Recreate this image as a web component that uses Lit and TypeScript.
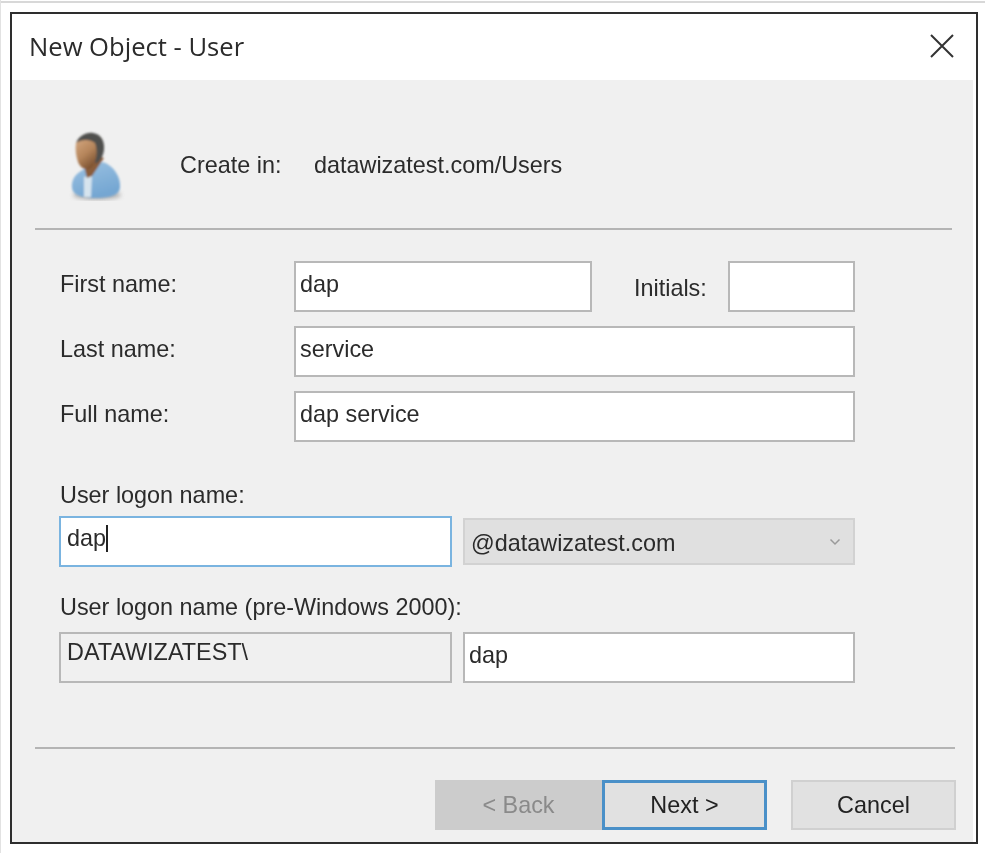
import { LitElement, html, css } from 'lit';
import { customElement } from 'lit/decorators.js';

@customElement('app-root')
export class AppRoot extends LitElement {
  static styles = css`
    :host {
      display: block;
      width: 985px;
      height: 853px;
      box-sizing: border-box;
      background: #fff;
      border-left: 1px solid #e2e2e2;
      padding: 0 0 0 9px;
      font-family: 'Liberation Sans', Arial, sans-serif;
      font-size: 23.4px;
      color: #2b2b2b;
      overflow: hidden;
    }
    .topline {
      height: 2px;
      margin: 1px 0 9px -9px;
      background: #d8d8d8;
    }
    .dialog {
      width: 968px;
      height: 832px;
      box-sizing: border-box;
      border: 2px solid #2e2e2e;
      background: #fff;
      padding-right: 3px;
      display: flex;
      flex-direction: column;
      filter: blur(0.5px);
    }
    .titlebar {
      height: 66px;
      flex: none;
      background: #fff;
      display: flex;
      align-items: center;
      justify-content: space-between;
      padding: 0 19px 0 17px;
      font-family: 'Open Sans', sans-serif;
      font-size: 25.6px;
    }
    .titlebar span {
      padding-bottom: 2px;
    }
    .close {
      display: block;
      margin-bottom: 2px;
    }
    .body {
      flex: 1;
      background: #f0f0f0;
      display: flex;
      flex-direction: column;
    }
    .head {
      height: 150px;
      flex: none;
      box-sizing: border-box;
      margin: 0 21px 0 23px;
      border-bottom: 2px solid #b4b4b4;
      display: flex;
      align-items: center;
      padding: 24px 0 0 29px;
    }
    .head span {
      padding-bottom: 2px;
    }
    .avatar {
      width: 64px;
      height: 80px;
      flex: none;
      margin-right: 52px;
    }
    .where {
      width: 134px;
    }
    .form {
      padding: 31px 0 0 48px;
      width: 795px;
      display: flex;
      flex-direction: column;
    }
    .row {
      display: flex;
      align-items: center;
      margin-bottom: 14px;
    }
    .row .lbl {
      width: 234px;
      flex: none;
      padding-bottom: 4px;
    }
    .field {
      box-sizing: border-box;
      height: 51px;
      background: #fff;
      border: 2px solid #b8b8b8;
      padding: 0 4px 5px;
      display: flex;
      align-items: center;
    }
    .grow {
      flex: 1;
    }
    .first {
      width: 298px;
      flex: none;
    }
    .ini-lbl {
      margin: 0 21px 0 42px;
      white-space: nowrap;
      padding-top: 4px;
    }
    .ini {
      width: 127px;
      flex: none;
    }
    .logon-lbl {
      margin-top: 26px;
      height: 27px;
      line-height: 27px;
      margin-bottom: 7px;
    }
    .pair {
      display: grid;
      grid-template-columns: 393px 392px;
      column-gap: 11px;
      align-items: center;
      margin-left: -1px;
    }
    .focus {
      border-color: #7ab4e0;
      padding-left: 6px;
      padding-bottom: 7px;
    }
    .caret {
      display: inline-block;
      width: 2px;
      height: 27px;
      background: #222;
    }
    .select {
      box-sizing: border-box;
      height: 47px;
      background: #e0e0e0;
      border: 2px solid #d2d2d2;
      display: flex;
      align-items: center;
      justify-content: space-between;
      padding: 3px 12px 0 6px;
    }
    .select svg {
      margin-bottom: 3px;
    }
    .pre-lbl {
      margin-top: 27px;
      height: 27px;
      line-height: 27px;
      margin-bottom: 11px;
    }
    .readonly {
      background: #f0f0f0;
      padding-left: 6px;
      padding-bottom: 10px;
    }
    .spacer {
      flex: 1;
    }
    .rule {
      height: 2px;
      flex: none;
      margin: 0 18px 0 23px;
      background: #b4b4b4;
    }
    .buttons {
      flex: none;
      display: flex;
      justify-content: flex-end;
      padding: 31px 17px 12px 0;
    }
    .btn {
      box-sizing: border-box;
      width: 165px;
      height: 50px;
      display: flex;
      align-items: center;
      justify-content: center;
      background: #e1e1e1;
      border: 2px solid #d0d0d0;
      color: #222;
    }
    .back {
      width: 167px;
      background: #cccccc;
      border-color: #cccccc;
      color: #8a8a8a;
    }
    .next {
      border: 3px solid #4a90c8;
      margin-right: 24px;
    }
  `;

  // coordinates in the viewBox are page pixels, so they can be read off the reference
  private renderAvatar() {
    return html`
      <svg class="avatar" viewBox="64 126 64 80">
        <defs>
          <linearGradient id="skin" x1="0" y1="0" x2="0.6" y2="1">
            <stop offset="0" stop-color="#d3a67e"></stop>
            <stop offset="0.55" stop-color="#b5855b"></stop>
            <stop offset="1" stop-color="#7d5332"></stop>
          </linearGradient>
          <linearGradient id="coat" x1="0" y1="0" x2="0.4" y2="1">
            <stop offset="0" stop-color="#9cc2e2"></stop>
            <stop offset="1" stop-color="#74a6d2"></stop>
          </linearGradient>
          <filter id="soft"><feGaussianBlur stdDeviation="1"></feGaussianBlur></filter>
          <filter id="shade"><feGaussianBlur stdDeviation="2.2"></feGaussianBlur></filter>
        </defs>
        <ellipse cx="97" cy="195" rx="24" ry="5" fill="#8f8f8f" opacity="0.6" filter="url(#shade)"></ellipse>
        <g filter="url(#soft)">
          <path d="M72 188C71 178 77 172 87 168L103 162C114 166 121 177 120 188C119 196 108 198 96 198C84 198 73 196 72 188Z" fill="url(#coat)"></path>
          <path d="M84 177L92 175L91 197H84Z" fill="#d6e4ee"></path>
          <path d="M85 170L92 155L104 158L92 176L87 178Z" fill="#8a5d3a"></path>
          <path d="M76 144C78 136 86 132 93 133C101 134 105 141 104 150C103 157 100 161 96 164L90 150L76 150Z" fill="#4f4f4d"></path>
          <path d="M76 143C82 139 90 139 95 143C98 151 97 162 91 168C87 171 81 169 78 162C76 156 75 149 76 143Z" fill="url(#skin)"></path>
        </g>
      </svg>
    `;
  }

  render() {
    return html`
      <div class="topline"></div>
      <div class="dialog">
        <div class="titlebar">
          <span>New Object - User</span>
          <svg class="close" width="24" height="24" viewBox="0 0 24 24">
            <path d="M1 1L23 23M23 1L1 23" stroke="#333" stroke-width="2" fill="none"></path>
          </svg>
        </div>

        <div class="body">
          <div class="head">
            ${this.renderAvatar()}
            <span class="where">Create in:</span>
            <span>datawizatest.com/Users</span>
          </div>

          <div class="form">
            <div class="row">
              <span class="lbl">First name:</span>
              <div class="field first">dap</div>
              <span class="ini-lbl">Initials:</span>
              <div class="field ini"></div>
            </div>
            <div class="row">
              <span class="lbl">Last name:</span>
              <div class="field grow">service</div>
            </div>
            <div class="row">
              <span class="lbl">Full name:</span>
              <div class="field grow">dap service</div>
            </div>

            <div class="logon-lbl">User logon name:</div>
            <div class="pair">
              <div class="field focus"><span>dap</span><span class="caret"></span></div>
              <div class="select">
                <span>@datawizatest.com</span>
                <svg width="12" height="8" viewBox="0 0 12 8">
                  <path d="M1.5 1.5L6 6L10.5 1.5" stroke="#9a9a9a" stroke-width="1.5" fill="none"></path>
                </svg>
              </div>
            </div>

            <div class="pre-lbl">User logon name (pre-Windows 2000):</div>
            <div class="pair">
              <div class="field readonly">DATAWIZATEST\\</div>
              <div class="field">dap</div>
            </div>
          </div>

          <div class="spacer"></div>
          <div class="rule"></div>
          <div class="buttons">
            <div class="btn back">&lt; Back</div>
            <div class="btn next">Next &gt;</div>
            <div class="btn">Cancel</div>
          </div>
        </div>
      </div>
    `;
  }
}

declare global {
  interface HTMLElementTagNameMap {
    'app-root': AppRoot;
  }
}
